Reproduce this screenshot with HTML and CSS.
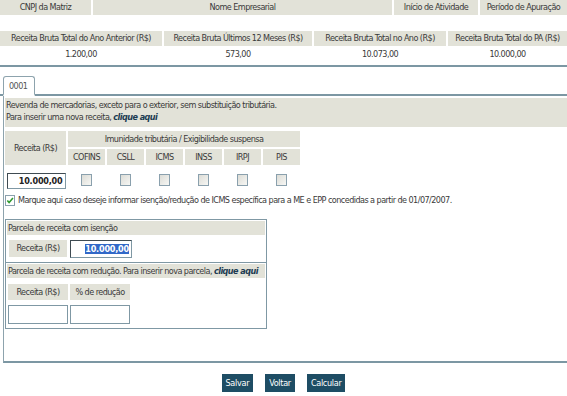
FILE: index.html
```html
<!DOCTYPE html>
<html lang="pt-BR">
<head>
<meta charset="utf-8"/>
<meta content="width=device-width, initial-scale=1.0" name="viewport"/>
<title>Receitas do Período de Apuração</title>
<link rel="stylesheet" href="styles.css">
</head>
<body>
<div class="dados-empresa">
  <div class="cab">CNPJ da Matriz</div>
  <div class="cab">Nome Empresarial</div>
  <div class="cab">Início de Atividade</div>
  <div class="cab">Período de Apuração</div>
</div>
<div class="receitas-brutas">
  <div class="cab">Receita Bruta Total do Ano Anterior (R$)</div>
  <div class="cab">Receita Bruta Últimos 12 Meses (R$)</div>
  <div class="cab">Receita Bruta Total no Ano (R$)</div>
  <div class="cab">Receita Bruta Total do PA (R$)</div>
  <div class="valor">1.200,00</div>
  <div class="valor">573,00</div>
  <div class="valor">10.073,00</div>
  <div class="valor">10.000,00</div>
</div>
<div class="barra"></div>

<div class="abas">
  <div class="aba">0001</div>
</div>
<div class="painel">
  <div class="atividade">
    Revenda de mercadorias, exceto para o exterior, sem substituição tributária.<br>
    Para inserir uma nova receita, <a class="link" href="#">clique aqui</a>
  </div>

  <div class="tabela-tributos">
    <div class="cab receita-cab">Receita (R$)</div>
    <div class="cab imunidade">Imunidade tributária / Exigibilidade suspensa</div>
    <div class="cab">COFINS</div>
    <div class="cab">CSLL</div>
    <div class="cab">ICMS</div>
    <div class="cab">INSS</div>
    <div class="cab">IRPJ</div>
    <div class="cab">PIS</div>
    <div class="linha-valor"><div class="campo campo-receita">10.000,00</div></div>
    <div class="linha-valor"><span class="check"></span></div>
    <div class="linha-valor"><span class="check"></span></div>
    <div class="linha-valor"><span class="check"></span></div>
    <div class="linha-valor"><span class="check"></span></div>
    <div class="linha-valor"><span class="check"></span></div>
    <div class="linha-valor"><span class="check"></span></div>
  </div>

  <div class="marque">
    <span class="check check-on"><svg width="9" height="9" viewBox="0 0 9 9"><path d="M1.5 4.5 L3.5 6.8 L7.8 1.8" fill="none" stroke="#2f9a2f" stroke-width="1.8"/></svg></span>
    Marque aqui caso deseje informar isenção/redução de ICMS específica para a ME e EPP concedidas a partir de 01/07/2007.
  </div>

  <div class="parcelas">
    <div class="parcela">
      <div class="parcela-titulo">Parcela de receita com isenção</div>
      <div class="parcela-linha">
        <div class="cab rotulo">Receita (R$)</div>
        <div class="campo campo-isencao"><span class="selecao">10.000,00</span></div>
      </div>
    </div>
    <div class="parcela">
      <div class="parcela-titulo">Parcela de receita com redução. Para inserir nova parcela, <a class="link" href="#">clique aqui</a></div>
      <div class="reducao">
        <div class="cab">Receita (R$)</div>
        <div class="cab">% de redução</div>
        <div class="campo"></div>
        <div class="campo"></div>
      </div>
    </div>
  </div>
</div>

<div class="botoes">
  <button class="btn">Salvar</button>
  <button class="btn">Voltar</button>
  <button class="btn">Calcular</button>
</div>
</body>
</html>
```

FILE: styles.css
```css
* {
  margin: 0;
  padding: 0;
  box-sizing: border-box;
}
body {
  font-family: 'DejaVu Sans Condensed', 'DejaVu Sans', sans-serif;
  font-stretch: condensed;
  font-size: 9px;
  letter-spacing: -0.55px;
  color: #3a3a3a;
  background: white;
  width: 567px;
}
.cab {
  background: #e2e2d8;
  text-align: center;
  height: 15px;
  line-height: 15px;
  white-space: nowrap;
}
.dados-empresa {
  display: grid;
  grid-template-columns: 91px 299px 84px 1fr;
  column-gap: 2px;
}
.receitas-brutas {
  display: grid;
  grid-template-columns: 162px 148px 132px 1fr;
  column-gap: 2px;
  margin-top: 16px;
}
.valor {
  text-align: center;
  line-height: 12px;
  padding-top: 2px;
}
.barra {
  height: 2px;
  background: #7c97a3;
  margin-top: 5px;
}
.abas {
  margin-top: 9px;
  height: 20px;
  display: flex;
  border-bottom: 2px solid #7c97a3;
}
.aba {
  margin-left: 3px;
  width: 32px;
  height: 20px;
  border: 1px solid #8da3ad;
  border-bottom: 2px solid white;
  border-radius: 3px 3px 0 0;
  background: white;
  padding: 3px 0 0 5px;
  line-height: 12px;
  color: #555;
}
.painel {
  margin-left: 3px;
  height: 267px;
  border-left: 1px solid #8da3ad;
  border-bottom: 2px solid #7c97a3;
  padding: 2px 0 0 1px;
}
.atividade {
  background: #e2e2d8;
  padding: 1px 0 4px 1px;
  line-height: 12px;
}
.link {
  color: #1c3b52;
  font-weight: bold;
  font-style: italic;
  text-decoration: none;
}
.tabela-tributos {
  display: grid;
  grid-template-columns: 61px repeat(6, 37px);
  gap: 2px;
  margin-top: 4px;
}
.tabela-tributos .cab {
  height: 16px;
  line-height: 16px;
}
.receita-cab {
  grid-row: span 2;
  height: auto !important;
  line-height: 34px !important;
}
.imunidade {
  grid-column: span 6;
}
.linha-valor {
  height: 22px;
  padding-top: 6px;
  display: flex;
  justify-content: center;
}
.campo {
  height: 16px;
  border: 1px solid #7f98a4;
  background: white;
  line-height: 14px;
  padding: 0 2px;
  text-align: right;
}
.campo-receita {
  width: 59px;
  margin-left: 1px;
  border-top-color: #3f4b52;
  border-left-color: #3f4b52;
  font-weight: bold;
  letter-spacing: -0.2px;
  color: #222;
}
.check {
  display: inline-block;
  width: 11px;
  height: 12px;
  margin-top: 1px;
  border: 1px solid #8aa0ad;
  background: linear-gradient(135deg, #dcdcd6, #f7f7f4);
}
.marque {
  margin-top: 5px;
  display: flex;
  align-items: center;
  gap: 3px;
  line-height: 12px;
  white-space: nowrap;
}
.check-on {
  width: 10px;
  height: 11px;
  margin-top: 0;
  background: white;
  display: flex;
  align-items: center;
  justify-content: center;
}
.parcelas {
  width: 262px;
  margin-top: 13px;
  border: 1px solid #7f98a4;
}
.parcela + .parcela {
  border-top: 1px solid #7f98a4;
}
.parcela-titulo {
  background: #e2e2d8;
  margin: 1px 1px 0;
  padding-left: 1px;
  height: 14px;
  line-height: 14px;
  white-space: nowrap;
}
.parcela-linha {
  display: flex;
  gap: 3px;
  padding: 5px 0 4px 3px;
}
.rotulo {
  width: 58px;
  height: 17px;
  line-height: 17px;
}
.campo-isencao {
  width: 62px;
  height: 18px;
  line-height: 16px;
  font-weight: bold;
  letter-spacing: -0.2px;
  border-top-color: #3f4b52;
  border-left-color: #3f4b52;
}
.selecao {
  background: #3168c8;
  color: white;
}
.reducao {
  display: grid;
  grid-template-columns: 60px 60px;
  column-gap: 2px;
  row-gap: 5px;
  padding: 6px 0 4px 2px;
}
.reducao .cab {
  height: 16px;
  line-height: 16px;
}
.reducao .campo {
  height: 19px;
}
.botoes {
  display: flex;
  justify-content: center;
  gap: 12px;
  margin-top: 11px;
}
.btn {
  font-family: inherit;
  font-size: 9px;
  letter-spacing: -0.3px;
  color: white;
  background: #1e4d64;
  border: none;
  height: 18px;
  padding: 0 4px;
}
```
